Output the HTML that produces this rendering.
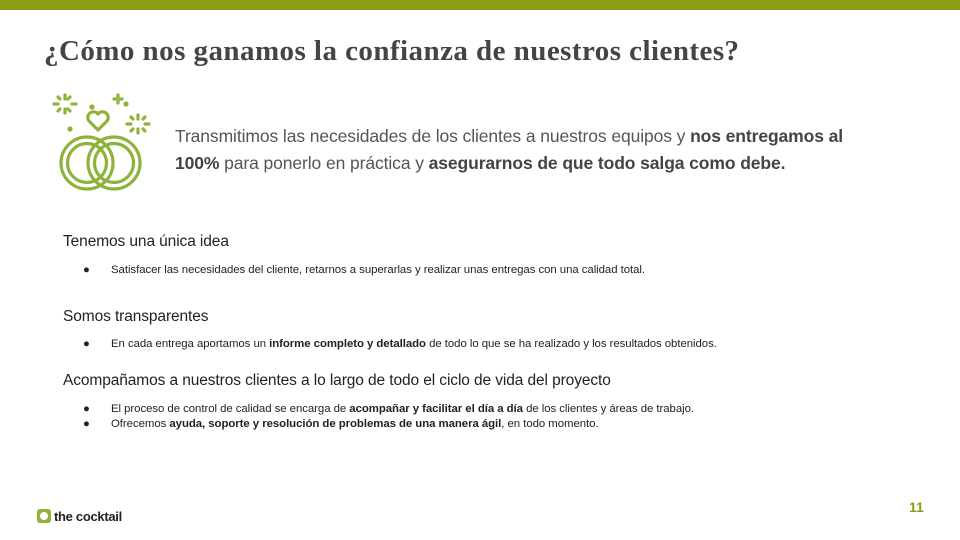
<!DOCTYPE html>
<html><head><meta charset="utf-8"><style>
body{margin:0;width:960px;height:540px;background:#fff;position:relative;overflow:hidden;font-family:"Liberation Sans",sans-serif;color:#222}
.bar{position:absolute;left:0;top:0;width:960px;height:10px;background:#8b9c17}
h1{position:absolute;left:44px;top:35px;margin:0;font-family:"Liberation Serif",serif;font-weight:bold;font-size:29px;color:#444;letter-spacing:0.45px}
.intro{position:absolute;left:175px;top:120px;width:690px;font-size:17.5px;line-height:27px;color:#555;letter-spacing:-0.1px}
.intro b{color:#444}
.h{position:absolute;left:63px;font-size:15.5px;color:#222;letter-spacing:-0.1px}
.li{position:absolute;left:83px;font-size:11.4px;color:#222;letter-spacing:-0.05px}
.li span{position:absolute;left:28px;white-space:nowrap}
.num{position:absolute;left:909px;top:499px;font-weight:bold;font-size:14px;color:#8b9c17}
.logo{position:absolute;left:37px;top:509px;font-weight:bold;font-size:13px;color:#222;letter-spacing:-0.3px}
.logo i{display:inline-block;width:14px;height:14px;background:#8db33a;border-radius:3px;vertical-align:-2px;margin-right:3px;position:relative}
.logo i:after{content:"";position:absolute;left:3px;top:3px;width:8px;height:8px;border-radius:50%;background:#fff}
</style></head><body>
<div class="bar"></div>
<h1>¿Cómo nos ganamos la confianza de nuestros clientes?</h1>
<svg style="position:absolute;left:40px;top:85px" width="120" height="110" viewBox="0 0 120 110" fill="none" stroke="#8db33a" stroke-width="3.2" stroke-linecap="round">
<circle cx="47" cy="78" r="26"/><circle cx="47" cy="78" r="19.5"/>
<circle cx="74" cy="78" r="26"/><circle cx="74" cy="78" r="19.5"/>
<path d="M58 45 L49 36 A5 5 0 0 1 58 29 A5 5 0 0 1 67 36 Z" stroke-linejoin="round"/>
<path d="M25 10v4M25 24v4M14 19h4M32 19h4M18 12l2 2M30 12l-2 2M18 26l2-2M30 26l-2-2"/>
<path d="M98 30v4M98 44v4M87 39h4M105 39h4M91 32l2 2M105 32l-2 2M91 46l2-2M105 46l-2-2"/>
<path d="M78 10v2M78 16v2M74 14h2M80 14h2"/>
<circle cx="52" cy="22" r="1" fill="#8db33a"/><circle cx="30" cy="44" r="1" fill="#8db33a"/><circle cx="86" cy="19" r="1" fill="#8db33a"/>
</svg>
<div class="intro" style="top:123px">Transmitimos las necesidades de los clientes a nuestros equipos y <b>nos entregamos al 100%</b> para ponerlo en práctica y <b>asegurarnos de que todo salga como debe.</b></div>
<div class="h" style="top:233px">Tenemos una única idea</div>
<div class="li" style="top:264px">●<span>Satisfacer las necesidades del cliente, retarnos a superarlas y realizar unas entregas con una calidad total.</span></div>
<div class="h" style="top:308px">Somos transparentes</div>
<div class="li" style="top:338px">●<span>En cada entrega aportamos un <b>informe completo y detallado</b> de todo lo que se ha realizado y los resultados obtenidos.</span></div>
<div class="h" style="top:372px">Acompañamos a nuestros clientes a lo largo de todo el ciclo de vida del proyecto</div>
<div class="li" style="top:403px">●<span>El proceso de control de calidad se encarga de <b>acompañar y facilitar el día a día</b> de los clientes y áreas de trabajo.</span></div>
<div class="li" style="top:418px">●<span>Ofrecemos <b>ayuda, soporte y resolución de problemas de una manera ágil</b>, en todo momento.</span></div>
<div class="logo"><i></i>the cocktail</div>
<div class="num">11</div>
</body></html>
